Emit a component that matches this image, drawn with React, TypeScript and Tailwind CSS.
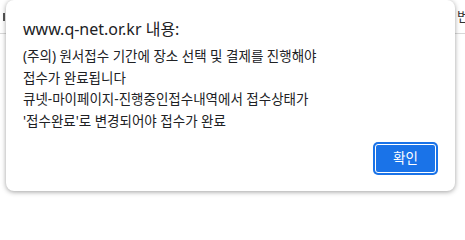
import React from "react";

const lines = [
  "(주의) 원서접수 기간에 장소 선택 및 결제를 진행해야",
  "접수가 완료됩니다",
  "큐넷-마이페이지-진행중인접수내역에서 접수상태가",
  "'접수완료'로 변경되어야 접수가 완료",
];

const AlertDialog: React.FC = () => {
  return (
    <div className="absolute left-[6px] top-0 flex h-[191px] w-[449px] flex-col rounded-[8px] bg-white px-[17px] pb-[16px] pt-[19px] shadow-[0_1px_5px_rgba(0,0,0,0.38)]">
      <div className="text-[16px] leading-[20px] text-[#202124]">
        www.q-net.or.kr 내용:
      </div>
      <div className="mt-[7px] text-[13.5px] leading-[21.5px] text-[#202124]">
        {lines.map((line) => (
          <div key={line}>{line}</div>
        ))}
      </div>
      <div className="mt-auto flex justify-end">
        <button className="flex h-[33px] w-[65px] rounded-[5px] bg-[#1a73e8] p-[2px]">
          <span className="flex flex-1 items-center justify-center rounded-[3px] border border-white text-[13.5px] text-white">
            확인
          </span>
        </button>
      </div>
    </div>
  );
};

export default function App() {
  return (
    <div
      className="relative h-[200px] w-[465px] overflow-hidden bg-white"
      style={{ fontFamily: '"Noto Sans", "Noto Sans CJK KR", sans-serif' }}
    >
      {/* page behind the alert */}
      <div className="flex h-[34px] items-center justify-between border-b border-[#d8d8d8]">
        <div className="ml-[3px] h-[8px] w-[2px] bg-[#555]" />
        <span className="translate-x-[4px] text-[13px] text-[#333]">번</span>
      </div>
      <AlertDialog />
    </div>
  );
}
